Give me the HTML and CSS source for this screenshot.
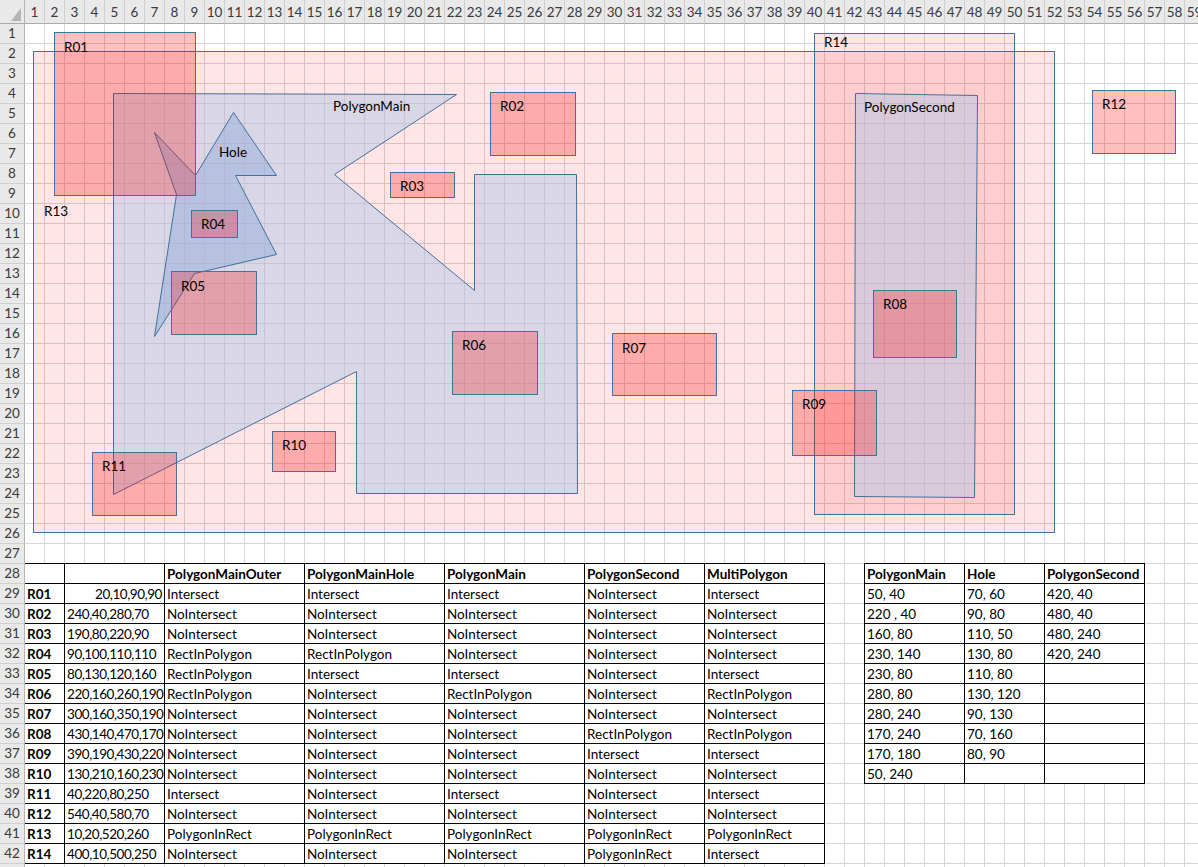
FILE: index.html
```html
<!DOCTYPE html>
<html>
<head>
<meta charset="utf-8">
<link rel="stylesheet" href="styles.css">
</head>
<body>
<div class="sheet">
  <div class="colhead">
    <div class="corner"><svg class="tri" width="10" height="13" viewBox="0 0 10 13"><polygon points="10,0 10,13 0,13" fill="#b4b4b4"/></svg></div>
    <div class="ch">1</div><div class="ch">2</div><div class="ch">3</div><div class="ch">4</div><div class="ch">5</div><div class="ch">6</div><div class="ch">7</div><div class="ch">8</div><div class="ch">9</div><div class="ch">10</div>
    <div class="ch">11</div><div class="ch">12</div><div class="ch">13</div><div class="ch">14</div><div class="ch">15</div><div class="ch">16</div><div class="ch">17</div><div class="ch">18</div><div class="ch">19</div><div class="ch">20</div>
    <div class="ch">21</div><div class="ch">22</div><div class="ch">23</div><div class="ch">24</div><div class="ch">25</div><div class="ch">26</div><div class="ch">27</div><div class="ch">28</div><div class="ch">29</div><div class="ch">30</div>
    <div class="ch">31</div><div class="ch">32</div><div class="ch">33</div><div class="ch">34</div><div class="ch">35</div><div class="ch">36</div><div class="ch">37</div><div class="ch">38</div><div class="ch">39</div><div class="ch">40</div>
    <div class="ch">41</div><div class="ch">42</div><div class="ch">43</div><div class="ch">44</div><div class="ch">45</div><div class="ch">46</div><div class="ch">47</div><div class="ch">48</div><div class="ch">49</div><div class="ch">50</div>
    <div class="ch">51</div><div class="ch">52</div><div class="ch">53</div><div class="ch">54</div><div class="ch">55</div><div class="ch">56</div><div class="ch">57</div><div class="ch">58</div><div class="ch">59</div>
  </div>
  <div class="main">
    <div class="rowhead">
      <div class="rh">1</div><div class="rh">2</div><div class="rh">3</div><div class="rh">4</div><div class="rh">5</div><div class="rh">6</div><div class="rh">7</div><div class="rh">8</div><div class="rh">9</div><div class="rh">10</div>
      <div class="rh">11</div><div class="rh">12</div><div class="rh">13</div><div class="rh">14</div><div class="rh">15</div><div class="rh rh-active">16</div><div class="rh">17</div><div class="rh">18</div><div class="rh">19</div><div class="rh">20</div>
      <div class="rh">21</div><div class="rh">22</div><div class="rh">23</div><div class="rh">24</div><div class="rh">25</div><div class="rh">26</div><div class="rh">27</div><div class="rh">28</div><div class="rh">29</div><div class="rh">30</div>
      <div class="rh">31</div><div class="rh">32</div><div class="rh">33</div><div class="rh">34</div><div class="rh">35</div><div class="rh">36</div><div class="rh">37</div><div class="rh">38</div><div class="rh">39</div><div class="rh">40</div>
      <div class="rh">41</div><div class="rh">42</div><div class="rh">43</div>
    </div>
    <div class="cells">
      <div class="tbl tbl-results">
        <div class="c"></div><div class="c"></div><div class="c b">PolygonMainOuter</div><div class="c b">PolygonMainHole</div><div class="c b">PolygonMain</div><div class="c b">PolygonSecond</div><div class="c b">MultiPolygon</div>
        <div class="c b">R01</div><div class="c n r">20,10,90,90</div><div class="c">Intersect</div><div class="c">Intersect</div><div class="c">Intersect</div><div class="c">NoIntersect</div><div class="c">Intersect</div>
        <div class="c b">R02</div><div class="c n">240,40,280,70</div><div class="c">NoIntersect</div><div class="c">NoIntersect</div><div class="c">NoIntersect</div><div class="c">NoIntersect</div><div class="c">NoIntersect</div>
        <div class="c b">R03</div><div class="c n">190,80,220,90</div><div class="c">NoIntersect</div><div class="c">NoIntersect</div><div class="c">NoIntersect</div><div class="c">NoIntersect</div><div class="c">NoIntersect</div>
        <div class="c b">R04</div><div class="c n">90,100,110,110</div><div class="c">RectInPolygon</div><div class="c">RectInPolygon</div><div class="c">NoIntersect</div><div class="c">NoIntersect</div><div class="c">NoIntersect</div>
        <div class="c b">R05</div><div class="c n">80,130,120,160</div><div class="c">RectInPolygon</div><div class="c">Intersect</div><div class="c">Intersect</div><div class="c">NoIntersect</div><div class="c">Intersect</div>
        <div class="c b">R06</div><div class="c n">220,160,260,190</div><div class="c">RectInPolygon</div><div class="c">NoIntersect</div><div class="c">RectInPolygon</div><div class="c">NoIntersect</div><div class="c">RectInPolygon</div>
        <div class="c b">R07</div><div class="c n">300,160,350,190</div><div class="c">NoIntersect</div><div class="c">NoIntersect</div><div class="c">NoIntersect</div><div class="c">NoIntersect</div><div class="c">NoIntersect</div>
        <div class="c b">R08</div><div class="c n">430,140,470,170</div><div class="c">NoIntersect</div><div class="c">NoIntersect</div><div class="c">NoIntersect</div><div class="c">RectInPolygon</div><div class="c">RectInPolygon</div>
        <div class="c b">R09</div><div class="c n">390,190,430,220</div><div class="c">NoIntersect</div><div class="c">NoIntersect</div><div class="c">NoIntersect</div><div class="c">Intersect</div><div class="c">Intersect</div>
        <div class="c b">R10</div><div class="c n">130,210,160,230</div><div class="c">NoIntersect</div><div class="c">NoIntersect</div><div class="c">NoIntersect</div><div class="c">NoIntersect</div><div class="c">NoIntersect</div>
        <div class="c b">R11</div><div class="c n">40,220,80,250</div><div class="c">Intersect</div><div class="c">NoIntersect</div><div class="c">Intersect</div><div class="c">NoIntersect</div><div class="c">Intersect</div>
        <div class="c b">R12</div><div class="c n">540,40,580,70</div><div class="c">NoIntersect</div><div class="c">NoIntersect</div><div class="c">NoIntersect</div><div class="c">NoIntersect</div><div class="c">NoIntersect</div>
        <div class="c b">R13</div><div class="c n">10,20,520,260</div><div class="c">PolygonInRect</div><div class="c">PolygonInRect</div><div class="c">PolygonInRect</div><div class="c">PolygonInRect</div><div class="c">PolygonInRect</div>
        <div class="c b">R14</div><div class="c n">400,10,500,250</div><div class="c">NoIntersect</div><div class="c">NoIntersect</div><div class="c">NoIntersect</div><div class="c">PolygonInRect</div><div class="c">Intersect</div>
      </div>
      <div class="tbl tbl-points">
        <div class="c b">PolygonMain</div><div class="c b">Hole</div><div class="c b">PolygonSecond</div>
        <div class="c">50, 40</div><div class="c">70, 60</div><div class="c">420, 40</div>
        <div class="c">220 , 40</div><div class="c">90, 80</div><div class="c">480, 40</div>
        <div class="c">160, 80</div><div class="c">110, 50</div><div class="c">480, 240</div>
        <div class="c">230, 140</div><div class="c">130, 80</div><div class="c">420, 240</div>
        <div class="c">230, 80</div><div class="c">110, 80</div><div class="c"></div>
        <div class="c">280, 80</div><div class="c">130, 120</div><div class="c"></div>
        <div class="c">280, 240</div><div class="c">90, 130</div><div class="c"></div>
        <div class="c">170, 240</div><div class="c">70, 160</div><div class="c"></div>
        <div class="c">170, 180</div><div class="c">80, 90</div><div class="c"></div>
        <div class="c">50, 240</div><div class="c"></div><div class="c"></div>
      </div>
    </div>
  </div>
  <svg class="canvas" width="1198" height="867" viewBox="0 0 1198 867">
    <g class="shape-rect-big">
      <rect x="33.5" y="51.5" width="1021" height="481"/>
      <rect x="814.5" y="33.5" width="200" height="481"/>
    </g>
    <polygon class="shape-poly" points="113.5,93.5 456.5,94.5 334.5,174.5 474.5,290.5 474.5,174.5 576.5,174.5 577.5,493.5 356.5,493.5 356.5,371.5 113.5,494.5"/>
    <polygon class="shape-hole" points="154.5,132.5 195.5,175.5 233.5,112.5 276.5,175.5 235.5,175.5 276.5,254.5 194.5,273.5 154.5,336.5 176.5,194.5"/>
    <polygon class="shape-poly" points="855.5,93.5 977.5,95.5 974.5,497.5 854.5,496.5"/>
    <g class="shape-rect">
      <rect x="54.5" y="32.5" width="141" height="163"/>
      <rect x="490.5" y="92.5" width="85" height="63"/>
      <rect x="390.5" y="172.5" width="64" height="25"/>
      <rect x="191.5" y="210.5" width="46" height="27"/>
      <rect x="171.5" y="271.5" width="85" height="63"/>
      <rect x="452.5" y="331.5" width="85" height="63"/>
      <rect x="612.5" y="333.5" width="104" height="62"/>
      <rect x="873.5" y="290.5" width="83" height="67"/>
      <rect x="792.5" y="390.5" width="84" height="65"/>
      <rect x="272.5" y="431.5" width="63" height="40"/>
      <rect x="92.5" y="452.5" width="84" height="63"/>
      <rect x="1092.5" y="90.5" width="83" height="63"/>
    </g>
    <g class="labels">
      <text x="64" y="52">R01</text>
      <text x="500" y="111">R02</text>
      <text x="400" y="191">R03</text>
      <text x="201" y="229">R04</text>
      <text x="181" y="291">R05</text>
      <text x="462" y="350">R06</text>
      <text x="622" y="353">R07</text>
      <text x="883" y="309">R08</text>
      <text x="802" y="409">R09</text>
      <text x="282" y="450">R10</text>
      <text x="102" y="471">R11</text>
      <text x="1102" y="109">R12</text>
      <text x="44" y="216">R13</text>
      <text x="824" y="47">R14</text>
      <text x="333" y="111">PolygonMain</text>
      <text x="219" y="157">Hole</text>
      <text x="864" y="112">PolygonSecond</text>
    </g>
  </svg>
</div>
</body>
</html>
```
FILE: styles.css
```css
html, body {
  margin: 0;
  padding: 0;
  background: #ffffff;
}

body {
  font-family: Lato, "Open Sans", sans-serif;
  font-size: 13.5px;
  color: #000;
}

.sheet {
  position: relative;
  width: 1198px;
  height: 867px;
  overflow: hidden;
  background: #ffffff;
}

.colhead {
  display: flex;
  height: 24px;
}

.corner {
  flex: none;
  position: relative;
  box-sizing: border-box;
  width: 25px;
  height: 24px;
  background: #e9e9e9;
  border-right: 1px solid #b5b5b5;
  border-bottom: 1px solid #ababab;
}

.tri {
  position: absolute;
  right: 3px;
  bottom: 2px;
}

.ch {
  flex: none;
  box-sizing: border-box;
  width: 20px;
  height: 24px;
  padding-top: 2px;
  line-height: 21px;
  text-align: center;
  color: #3a3a3a;
  background: #e9e9e9;
  border-right: 1px solid #d0d0d0;
  border-bottom: 1px solid #ababab;
  white-space: nowrap;
}

.main {
  display: flex;
}

.rowhead {
  flex: none;
  width: 25px;
  display: flex;
  flex-direction: column;
}

.rh {
  box-sizing: border-box;
  height: 20px;
  line-height: 19px;
  text-align: center;
  color: #3a3a3a;
  background: #e9e9e9;
  border-right: 1px solid #b5b5b5;
  border-bottom: 1px solid #d0d0d0;
}

.cells {
  flex: none;
  display: grid;
  grid-template-columns: repeat(59, 20px);
  grid-template-rows: repeat(43, 20px);
  background-image:
    linear-gradient(to right, transparent 19px, #d6d6d6 19px),
    linear-gradient(to bottom, transparent 19px, #d6d6d6 19px);
  background-size: 20px 20px;
}

.tbl {
  display: grid;
  grid-auto-rows: 20px;
  margin-top: -1px;
  border-top: 1px solid #000;
}

.tbl-results {
  grid-column: 1 / span 40;
  grid-row: 28 / span 15;
  grid-template-columns: 40px 100px 140px 140px 140px 120px 120px;
}

.tbl-points {
  grid-column: 43 / span 14;
  grid-row: 28 / span 11;
  margin-left: -1px;
  border-left: 1px solid #000;
  grid-template-columns: 100px 80px 100px;
}

.c {
  box-sizing: border-box;
  height: 20px;
  padding: 1px 2px 0;
  line-height: 18px;
  background: #fff;
  border-right: 1px solid #000;
  border-bottom: 1px solid #000;
  white-space: nowrap;
  overflow: hidden;
}

.b {
  font-weight: 700;
}

.n {
  letter-spacing: -0.45px;
}

.r {
  text-align: right;
}

.canvas {
  position: absolute;
  left: 0;
  top: 0;
  pointer-events: none;
}

.shape-rect-big rect {
  fill: rgba(255, 0, 0, 0.1);
  stroke: #41719c;
  stroke-width: 1;
}

.shape-poly {
  fill: rgba(180, 199, 231, 0.5);
  stroke: #41719c;
  stroke-width: 1;
}

.shape-hole {
  fill: rgba(143, 170, 220, 0.45);
  stroke: #41719c;
  stroke-width: 1;
}

.shape-rect rect {
  fill: rgba(255, 0, 0, 0.25);
  stroke: #41719c;
  stroke-width: 1;
}

.labels text {
  font-family: Lato, "Open Sans", sans-serif;
  font-size: 13.5px;
  fill: #000;
}
```
